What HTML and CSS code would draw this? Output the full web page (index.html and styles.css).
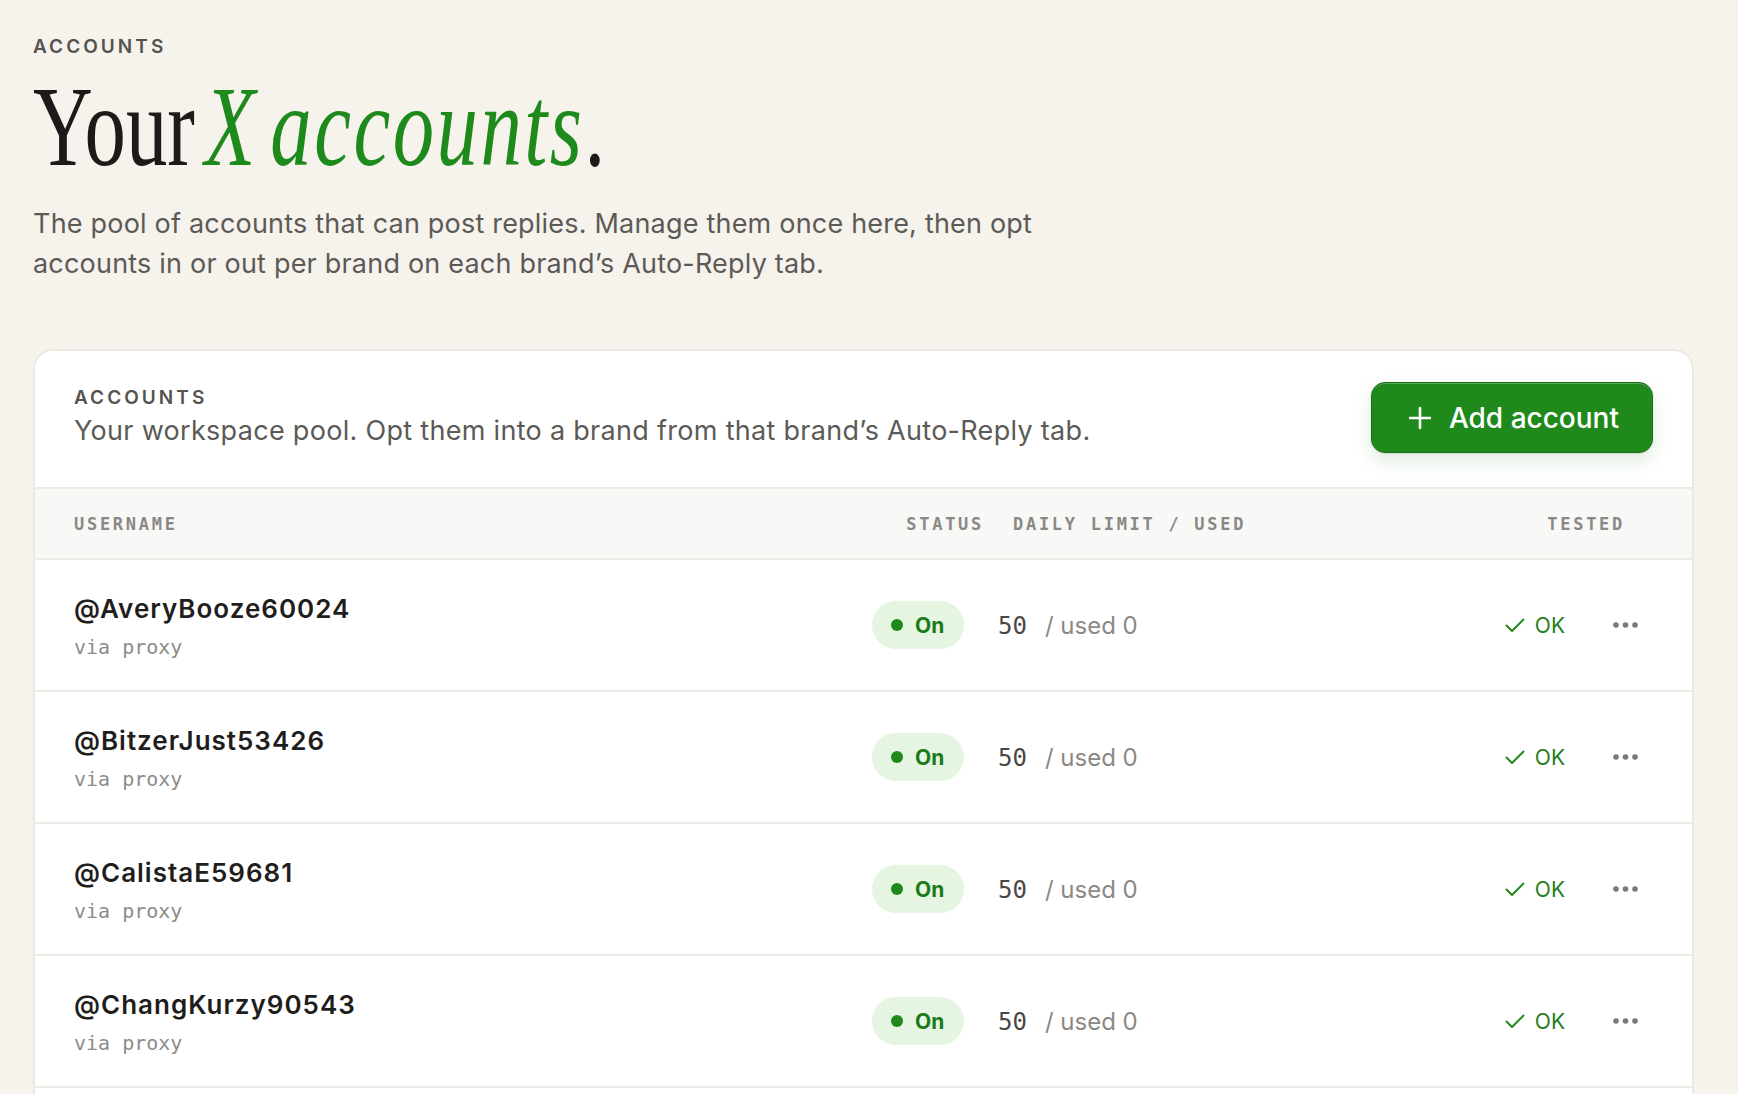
FILE: index.html
```html
<!DOCTYPE html>
<html lang="en">
<head>
  <meta charset="UTF-8">
  <title>Your X accounts</title>
  <meta name="viewport" content="width=device-width, initial-scale=1.0">
  <link rel="stylesheet" href="styles.css">
</head>
<body>
  <main class="page">
    <p class="eyebrow">Accounts</p>
    <h1 class="title">Your <em>X accounts</em>.</h1>
    <p class="lead">The pool of accounts that can post replies. Manage them once here, then opt accounts in or out per brand on each brand’s Auto-Reply tab.</p>

    <section class="card">
      <div class="card-head">
        <div>
          <p class="eyebrow">Accounts</p>
          <p class="card-sub">Your workspace pool. Opt them into a brand from that brand’s Auto-Reply tab.</p>
        </div>
        <button class="btn-add">
          <svg width="22" height="22" viewBox="0 0 22 22"><path d="M11 1v20M1 11h20" stroke="#fff" stroke-width="2.6" stroke-linecap="round"/></svg>
          Add account
        </button>
      </div>

      <div class="row thead">
        <span class="th">Username</span>
        <span class="th th-status">Status</span>
        <span class="th th-limit">Daily limit / used</span>
        <span class="th th-tested">Tested</span>
      </div>
      <div id="accountList"></div>
    </section>
  </main>

  <script>
    const accounts = [
      { handle: "AveryBooze60024", limit: 50, used: 0 },
      { handle: "BitzerJust53426", limit: 50, used: 0 },
      { handle: "CalistaE59681", limit: 50, used: 0 },
      { handle: "ChangKurzy90543", limit: 50, used: 0 },
      { handle: "DariusFell20871", limit: 50, used: 0 }
    ];

    const accountList = document.getElementById("accountList");

    accounts.forEach(a => {
      accountList.innerHTML += `<div class="row acct">
        <div class="user">
          <p class="user-name">@${a.handle}</p>
          <p class="user-via">via proxy</p>
        </div>
        <div><span class="pill">On</span></div>
        <div class="limit"><span class="limit-val">${a.limit}</span><span class="limit-used">/ used ${a.used}</span></div>
        <div class="tested">
          <svg width="20" height="15" viewBox="0 0 20 15"><path d="M1.5 7.5l5.5 5.5L18.5 1.5" fill="none" stroke="#1f8a1b" stroke-width="1.9" stroke-linecap="round" stroke-linejoin="round"/></svg>
          OK
        </div>
        <div class="more">
          <svg width="25" height="6" viewBox="0 0 25 6"><circle cx="3" cy="3" r="2.8"/><circle cx="12.5" cy="3" r="2.8"/><circle cx="22" cy="3" r="2.8"/></svg>
        </div>
      </div>`;
    });
  </script>
</body>
</html>
```

FILE: styles.css
```css
* { margin: 0; padding: 0; box-sizing: border-box; }
body { font-family: Inter, 'Noto Sans', sans-serif; background: #f6f2ec; color: #1f1e1c; }
.page { padding: 37px 44px 0 33px; }

.eyebrow {
  font-size: 19px;
  line-height: 20px;
  font-weight: 600;
  letter-spacing: 0.16em;
  text-transform: uppercase;
  color: #55534f;
}
.title {
  margin-top: 12px;
  font-family: 'Liberation Serif', serif;
  font-weight: 400;
  font-size: 115px;
  line-height: 115px;
  color: #1c1b19;
  white-space: nowrap;
  word-spacing: -0.13em;
  transform: scaleX(0.72);
  transform-origin: left;
}
.title em { color: #1f8a1c; letter-spacing: 0.03em; }
.lead {
  margin-top: 20px;
  max-width: 1030px;
  font-size: 27px;
  line-height: 40px;
  letter-spacing: 0.2px;
  color: #5c5a56;
}

/* Card */
.card {
  margin-top: 65px;
  background: #fff;
  border: 2px solid #ece9e3;
  border-radius: 20px;
  overflow: hidden;
}
.card-head {
  display: flex;
  align-items: center;
  justify-content: space-between;
  padding: 31px 39px 34px;
  border-bottom: 2px solid #ecebe6;
}
.card-sub { margin-top: 6px; font-size: 27px; line-height: 34px; letter-spacing: 0.3px; color: #5c5a56; }
.btn-add {
  display: flex;
  align-items: center;
  gap: 18px;
  height: 71px;
  padding: 0 33px 0 37px;
  background: #1f8a1b;
  color: #fff;
  border: 1.5px solid #166e17;
  border-radius: 14px;
  font: 500 28px Inter, sans-serif;
  cursor: pointer;
  box-shadow: inset 0 1px 0 rgba(255,255,255,0.25), 0 8px 18px rgba(31,138,27,0.14), 0 1px 2px rgba(0,0,0,0.1);
}

/* Table */
.row {
  display: grid;
  grid-template-columns: 1fr 126px 472px 95px 88px;
  align-items: center;
  padding: 0 39px;
  border-bottom: 2px solid #ecebe6;
}
.thead { height: 71px; padding-top: 1px; background: #f8f8f7; }
.th {
  font-family: 'DejaVu Sans Mono', monospace;
  font-size: 17px;
  font-weight: 700;
  letter-spacing: 0.16em;
  text-transform: uppercase;
  color: #8a8884;
}
.th-status { text-align: right; padding-right: 14px; }
.th-limit { padding-left: 15px; }
.th-tested { grid-column: 4 / 6; text-align: right; padding-right: 28px; }

.acct { height: 132px; }
.user { padding-top: 1px; }
.user-name { font-size: 26px; line-height: 32px; font-weight: 600; letter-spacing: 1px; color: #1f1e1c; }
.user-via { margin-top: 10px; font: 20px/24px 'DejaVu Sans Mono', monospace; color: #8d8b87; }

.pill {
  display: inline-flex;
  align-items: center;
  gap: 12px;
  height: 48px;
  padding: 0 20px 0 19px;
  border-radius: 24px;
  background: #e6f5e1;
  color: #1b7a18;
  font-size: 21px;
  font-weight: 700;
}
.pill::before { content: ''; width: 12px; height: 12px; border-radius: 50%; background: #1f8a1b; }

.limit { display: flex; align-items: baseline; }
.limit-val { font: 24px 'DejaVu Sans Mono', monospace; color: #4a4845; }
.limit-used { margin-left: 18px; font-size: 24px; color: #8b8985; }

.tested {
  display: flex;
  justify-content: flex-end;
  align-items: center;
  gap: 10px;
  font-size: 21px;
  color: #1f7d1b;
}
.more { display: flex; justify-content: flex-end; padding-right: 15px; fill: #7b7975; }
```
